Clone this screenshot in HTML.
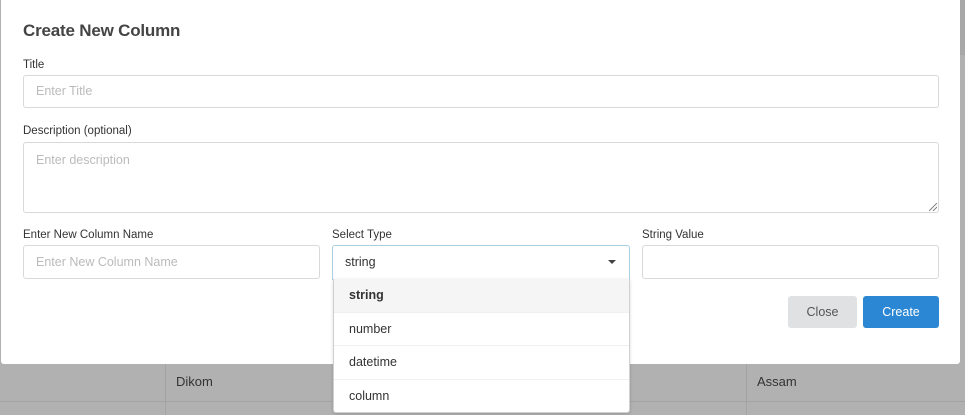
<!DOCTYPE html>
<html><head><meta charset="utf-8"><style>
*{box-sizing:border-box;margin:0;padding:0}
body{width:965px;height:415px;overflow:hidden;background:#b1b1b1;font-family:"Liberation Sans",sans-serif;position:relative;color:#333}
.bg{position:absolute;left:0;top:0;width:965px;height:415px;background:#b1b1b1}
.hl{position:absolute;left:0;width:965px;height:1px;background:#a3a3a3}
.vl{position:absolute;width:1px;background:#a3a3a3}
.modal{position:absolute;left:1px;top:0;width:959px;height:364px;background:#fff;border-radius:0 0 3px 3px}
h1{position:absolute;left:22px;top:21px;font-size:17px;font-weight:bold;color:#444;letter-spacing:-0.2px}
.lbl{position:absolute;font-size:11.5px;color:#333}
.inp{position:absolute;border:1px solid #d9d9d9;border-radius:3px;background:#fff;font-size:12.5px;color:#bbb;padding-left:12px}
.btn{position:absolute;top:296px;height:32px;border-radius:3px;font-size:12.5px;text-align:center;line-height:32px}
.dd{position:absolute;left:333px;top:279px;width:297px;height:134px;background:#fff;border:1px solid #d0d0d0;border-top:none;border-radius:0 0 3px 3px;box-shadow:0 1px 3px rgba(0,0,0,.15)}
.opt{height:33.5px;line-height:33px;padding-left:15px;font-size:12.5px;color:#333;border-bottom:1px solid #f0f0f0}
</style></head><body>
<div class="bg"></div>
<div class="hl" style="top:401px"></div>
<div class="vl" style="left:165px;top:364px;height:51px"></div>
<div class="vl" style="left:746px;top:364px;height:51px"></div>
<div style="position:absolute;left:176px;top:374px;font-size:13px;color:#333">Dikom</div>
<div style="position:absolute;left:757px;top:374px;font-size:13px;color:#333">Assam</div>
<div style="position:absolute;left:960px;top:0;width:5px;height:55px;background:#a8a8a8"></div>
<div class="modal">
<h1>Create New Column</h1>
<div class="lbl" style="left:22px;top:59px">Title</div>
<div class="inp" style="left:22px;top:75px;width:916px;height:33px;line-height:31px">Enter Title</div>
<div class="lbl" style="left:22px;top:125px">Description (optional)</div>
<div class="inp" style="left:22px;top:142px;width:916px;height:71px;padding-top:10px">Enter description</div>
<div style="position:absolute;left:928px;top:203px;width:8px;height:8px;background:linear-gradient(135deg,transparent 45%,#888 45%,#888 55%,transparent 55%,transparent 70%,#888 70%,#888 80%,transparent 80%)"></div>
<div class="lbl" style="left:22px;top:229px">Enter New Column Name</div>
<div class="inp" style="left:22px;top:245px;width:297px;height:34px;line-height:32px">Enter New Column Name</div>
<div class="lbl" style="left:331px;top:229px">Select Type</div>
<div class="inp" style="left:331px;top:245px;width:298px;height:35px;line-height:33px;border-color:#a9cfe0;color:#333;border-radius:3px 3px 0 0">string</div>
<div style="position:absolute;left:607px;top:260px;width:0;height:0;border-left:4px solid transparent;border-right:4px solid transparent;border-top:4px solid #444"></div>
<div class="lbl" style="left:641px;top:229px">String Value</div>
<div class="inp" style="left:641px;top:245px;width:297px;height:34px"></div>
<div class="btn" style="left:787px;width:69px;background:#e0e1e2;color:#555">Close</div>
<div class="btn" style="left:862px;width:76px;background:#2b86d3;color:#fff">Create</div>
</div>
<div class="dd">
<div class="opt" style="background:#f5f5f5;font-weight:bold">string</div>
<div class="opt">number</div>
<div class="opt">datetime</div>
<div class="opt" style="border:none">column</div>
</div>
</body></html>
